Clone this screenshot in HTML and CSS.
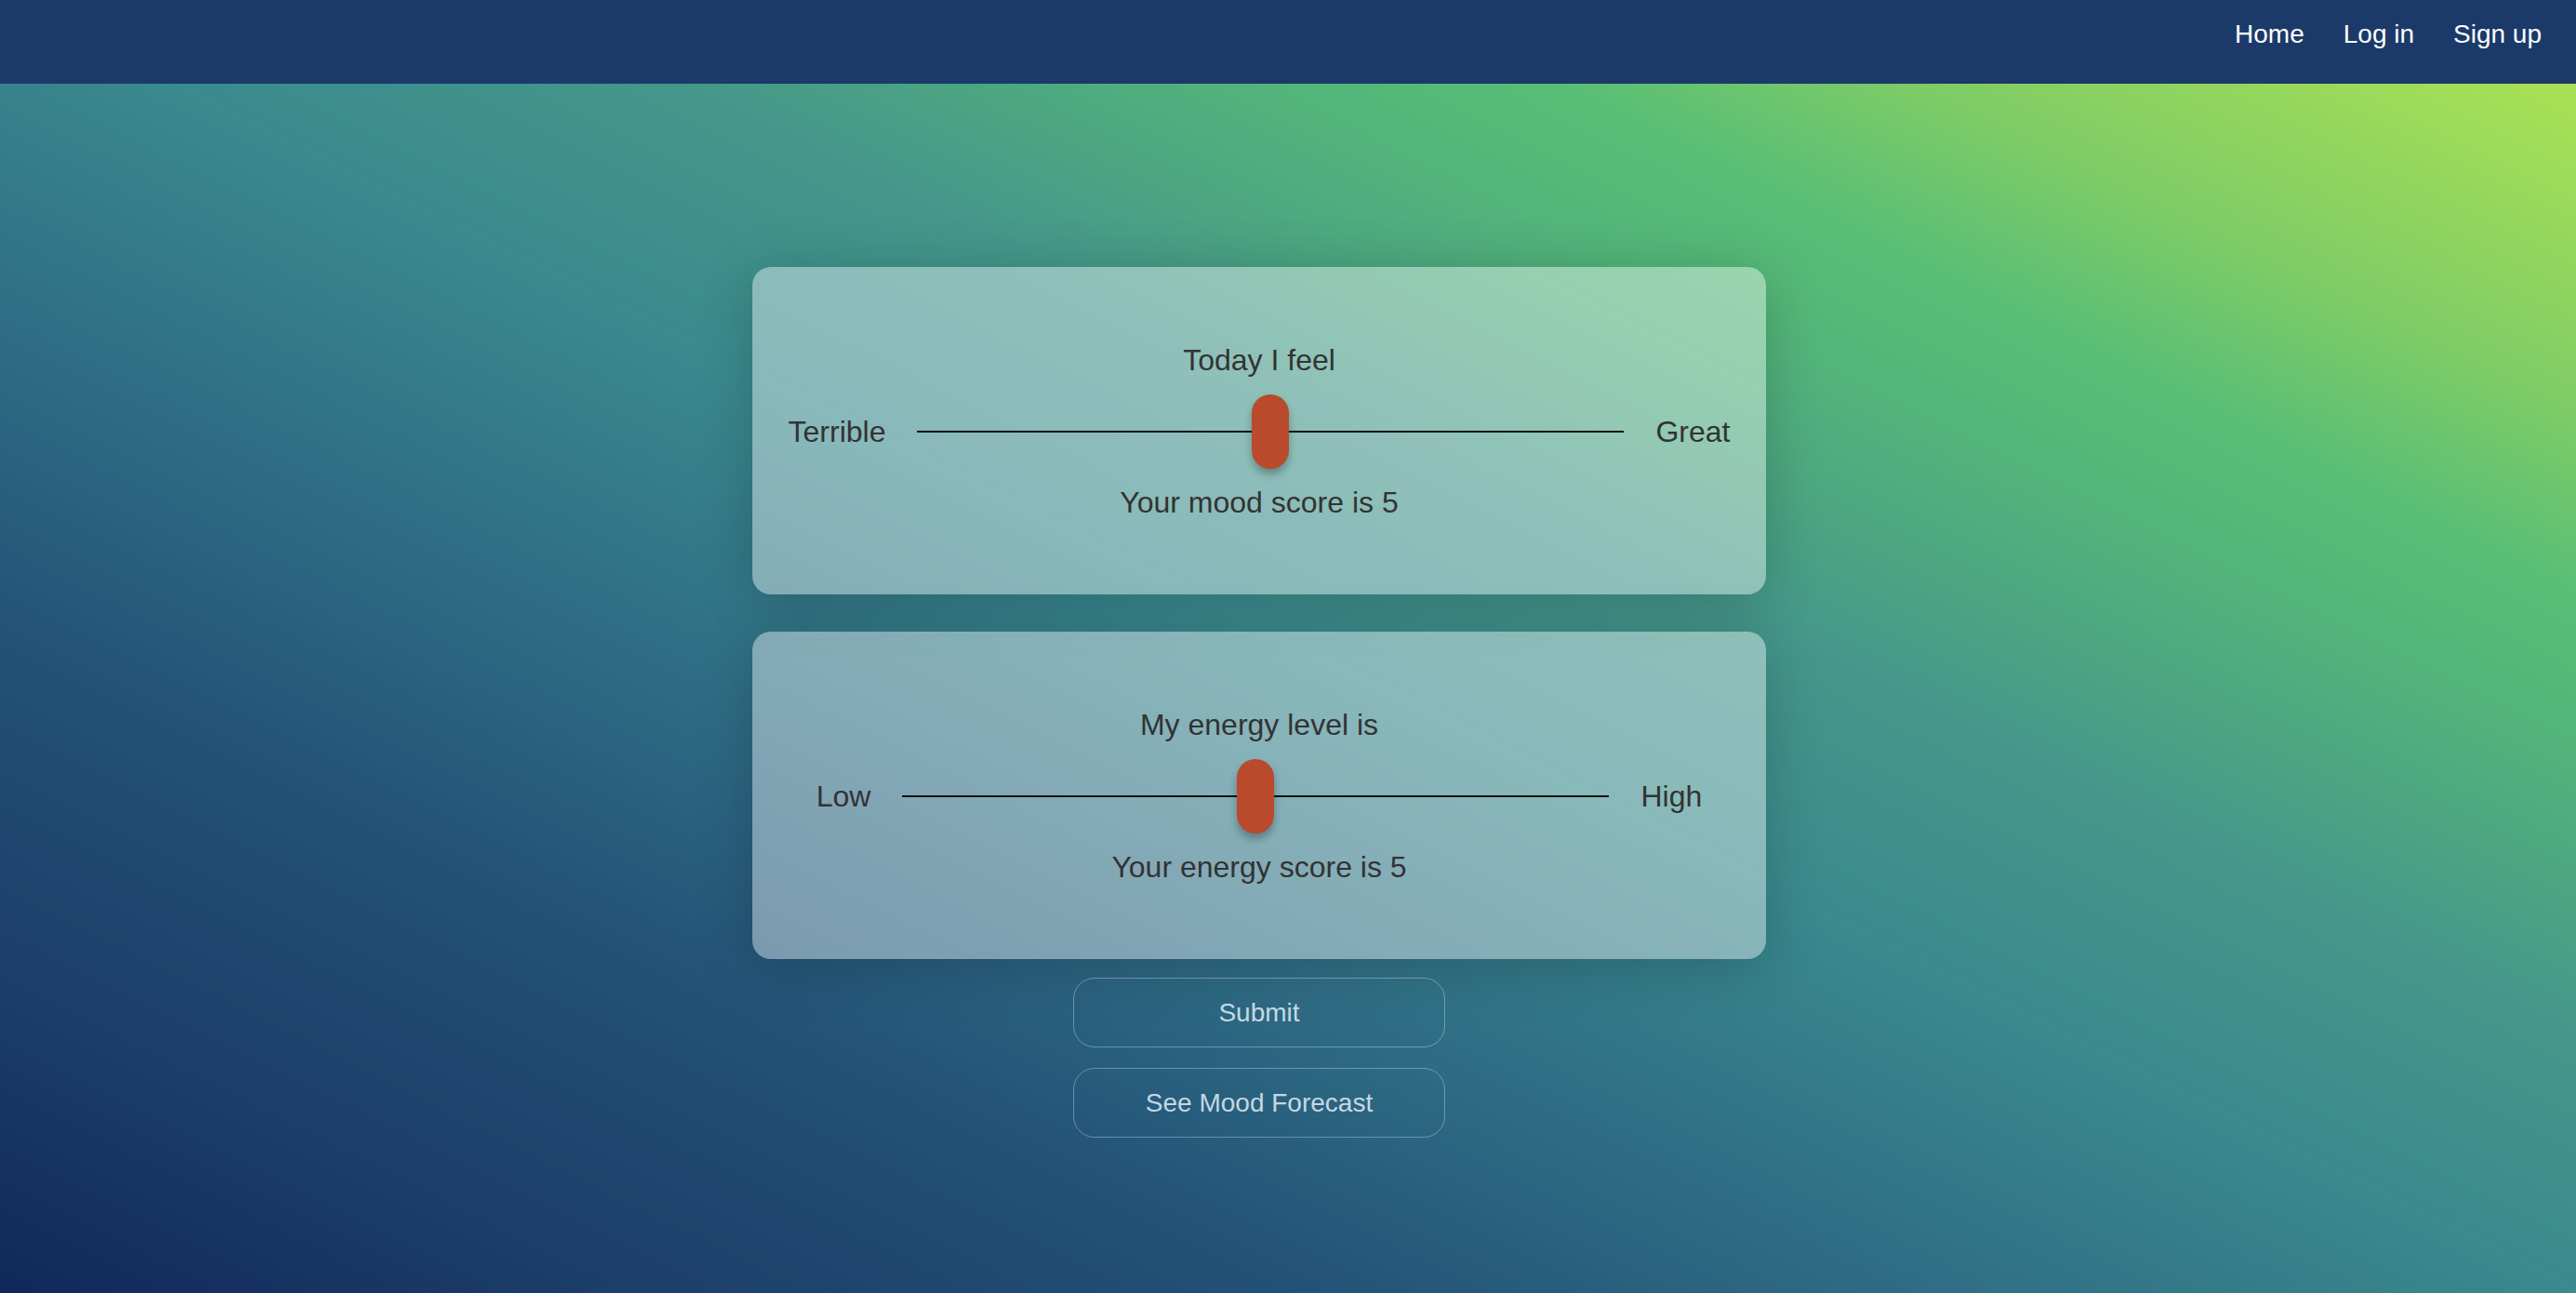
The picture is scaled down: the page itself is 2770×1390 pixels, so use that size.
FILE: index.html
```html
<!DOCTYPE html>
<html lang="en">
<head>
<meta charset="utf-8">
<title>Mood Tracker</title>
<link rel="stylesheet" href="styles.css">
</head>
<body>
<nav class="topnav">
  <a class="nav-link" href="#">Home</a>
  <a class="nav-link" href="#">Log in</a>
  <a class="nav-link" href="#">Sign up</a>
</nav>
<main class="content">
  <section class="card">
    <div class="card-title">Today I feel</div>
    <div class="slider-row">
      <span class="slider-label">Terrible</span>
      <div class="slider">
        <div class="track"></div>
        <div class="thumb" style="left: 50%"></div>
      </div>
      <span class="slider-label">Great</span>
    </div>
    <div class="card-score">Your mood score is 5</div>
  </section>
  <section class="card">
    <div class="card-title">My energy level is</div>
    <div class="slider-row">
      <span class="slider-label">Low</span>
      <div class="slider">
        <div class="track"></div>
        <div class="thumb" style="left: 50%"></div>
      </div>
      <span class="slider-label">High</span>
    </div>
    <div class="card-score">Your energy score is 5</div>
  </section>
  <div class="actions">
    <button class="btn" type="button">Submit</button>
    <button class="btn" type="button">See Mood Forecast</button>
  </div>
</main>
</body>
</html>
```
FILE: styles.css
```css
html, body {
  margin: 0;
  padding: 0;
}

body {
  min-height: 100vh;
  font-family: "Liberation Sans", Arial, Helvetica, sans-serif;
  background: linear-gradient(to top right,
    #11275a 0%,
    #1c3e6a 12%,
    #225177 25%,
    #2f6c84 37%,
    #3a8a8e 50%,
    #45978a 60%,
    #52b47a 71%,
    #58be76 77%,
    #7ecc66 84%,
    #a8e055 96%,
    #b0e451 100%);
  background-attachment: fixed;
}

.topnav {
  height: 90px;
  box-sizing: border-box;
  background: #1b3a6a;
  display: flex;
  justify-content: flex-end;
  align-items: flex-start;
  gap: 42px;
  padding: 21px 37px 0 0;
}

.nav-link {
  color: #ffffff;
  text-decoration: none;
  font-size: 28px;
}

.content {
  display: flex;
  flex-direction: column;
  align-items: center;
  padding: 197px 62px 0 0;
}

.card {
  width: 1090px;
  box-sizing: border-box;
  padding: 82px 40px 80px;
  margin-bottom: 40px;
  border-radius: 20px;
  background: rgba(255, 255, 255, 0.4);
  box-shadow: 0 8px 60px rgba(0, 0, 0, 0.2);
  display: flex;
  flex-direction: column;
  align-items: center;
  gap: 18px;
  color: #333333;
  font-size: 32px;
}

.card:last-of-type {
  margin-bottom: 20px;
}

.slider-row {
  display: flex;
  align-items: center;
  justify-content: center;
  gap: 34px;
}

.slider {
  position: relative;
  width: 760px;
  height: 80px;
  display: flex;
  align-items: center;
}

.track {
  width: 100%;
  height: 2px;
  background: #111111;
}

.thumb {
  position: absolute;
  top: 0;
  width: 40px;
  height: 80px;
  margin-left: -20px;
  border-radius: 20px;
  background: #b94a2c;
  box-shadow: 0 6px 8px rgba(0, 0, 0, 0.28);
}

.actions {
  display: flex;
  flex-direction: column;
  gap: 22px;
}

.btn {
  width: 400px;
  height: 75px;
  box-sizing: border-box;
  border: 1.5px solid rgba(255, 255, 255, 0.32);
  border-radius: 23px;
  background: transparent;
  color: rgba(225, 238, 245, 0.85);
  font-family: "Liberation Sans", Arial, Helvetica, sans-serif;
  font-size: 28px;
  cursor: pointer;
}
```
